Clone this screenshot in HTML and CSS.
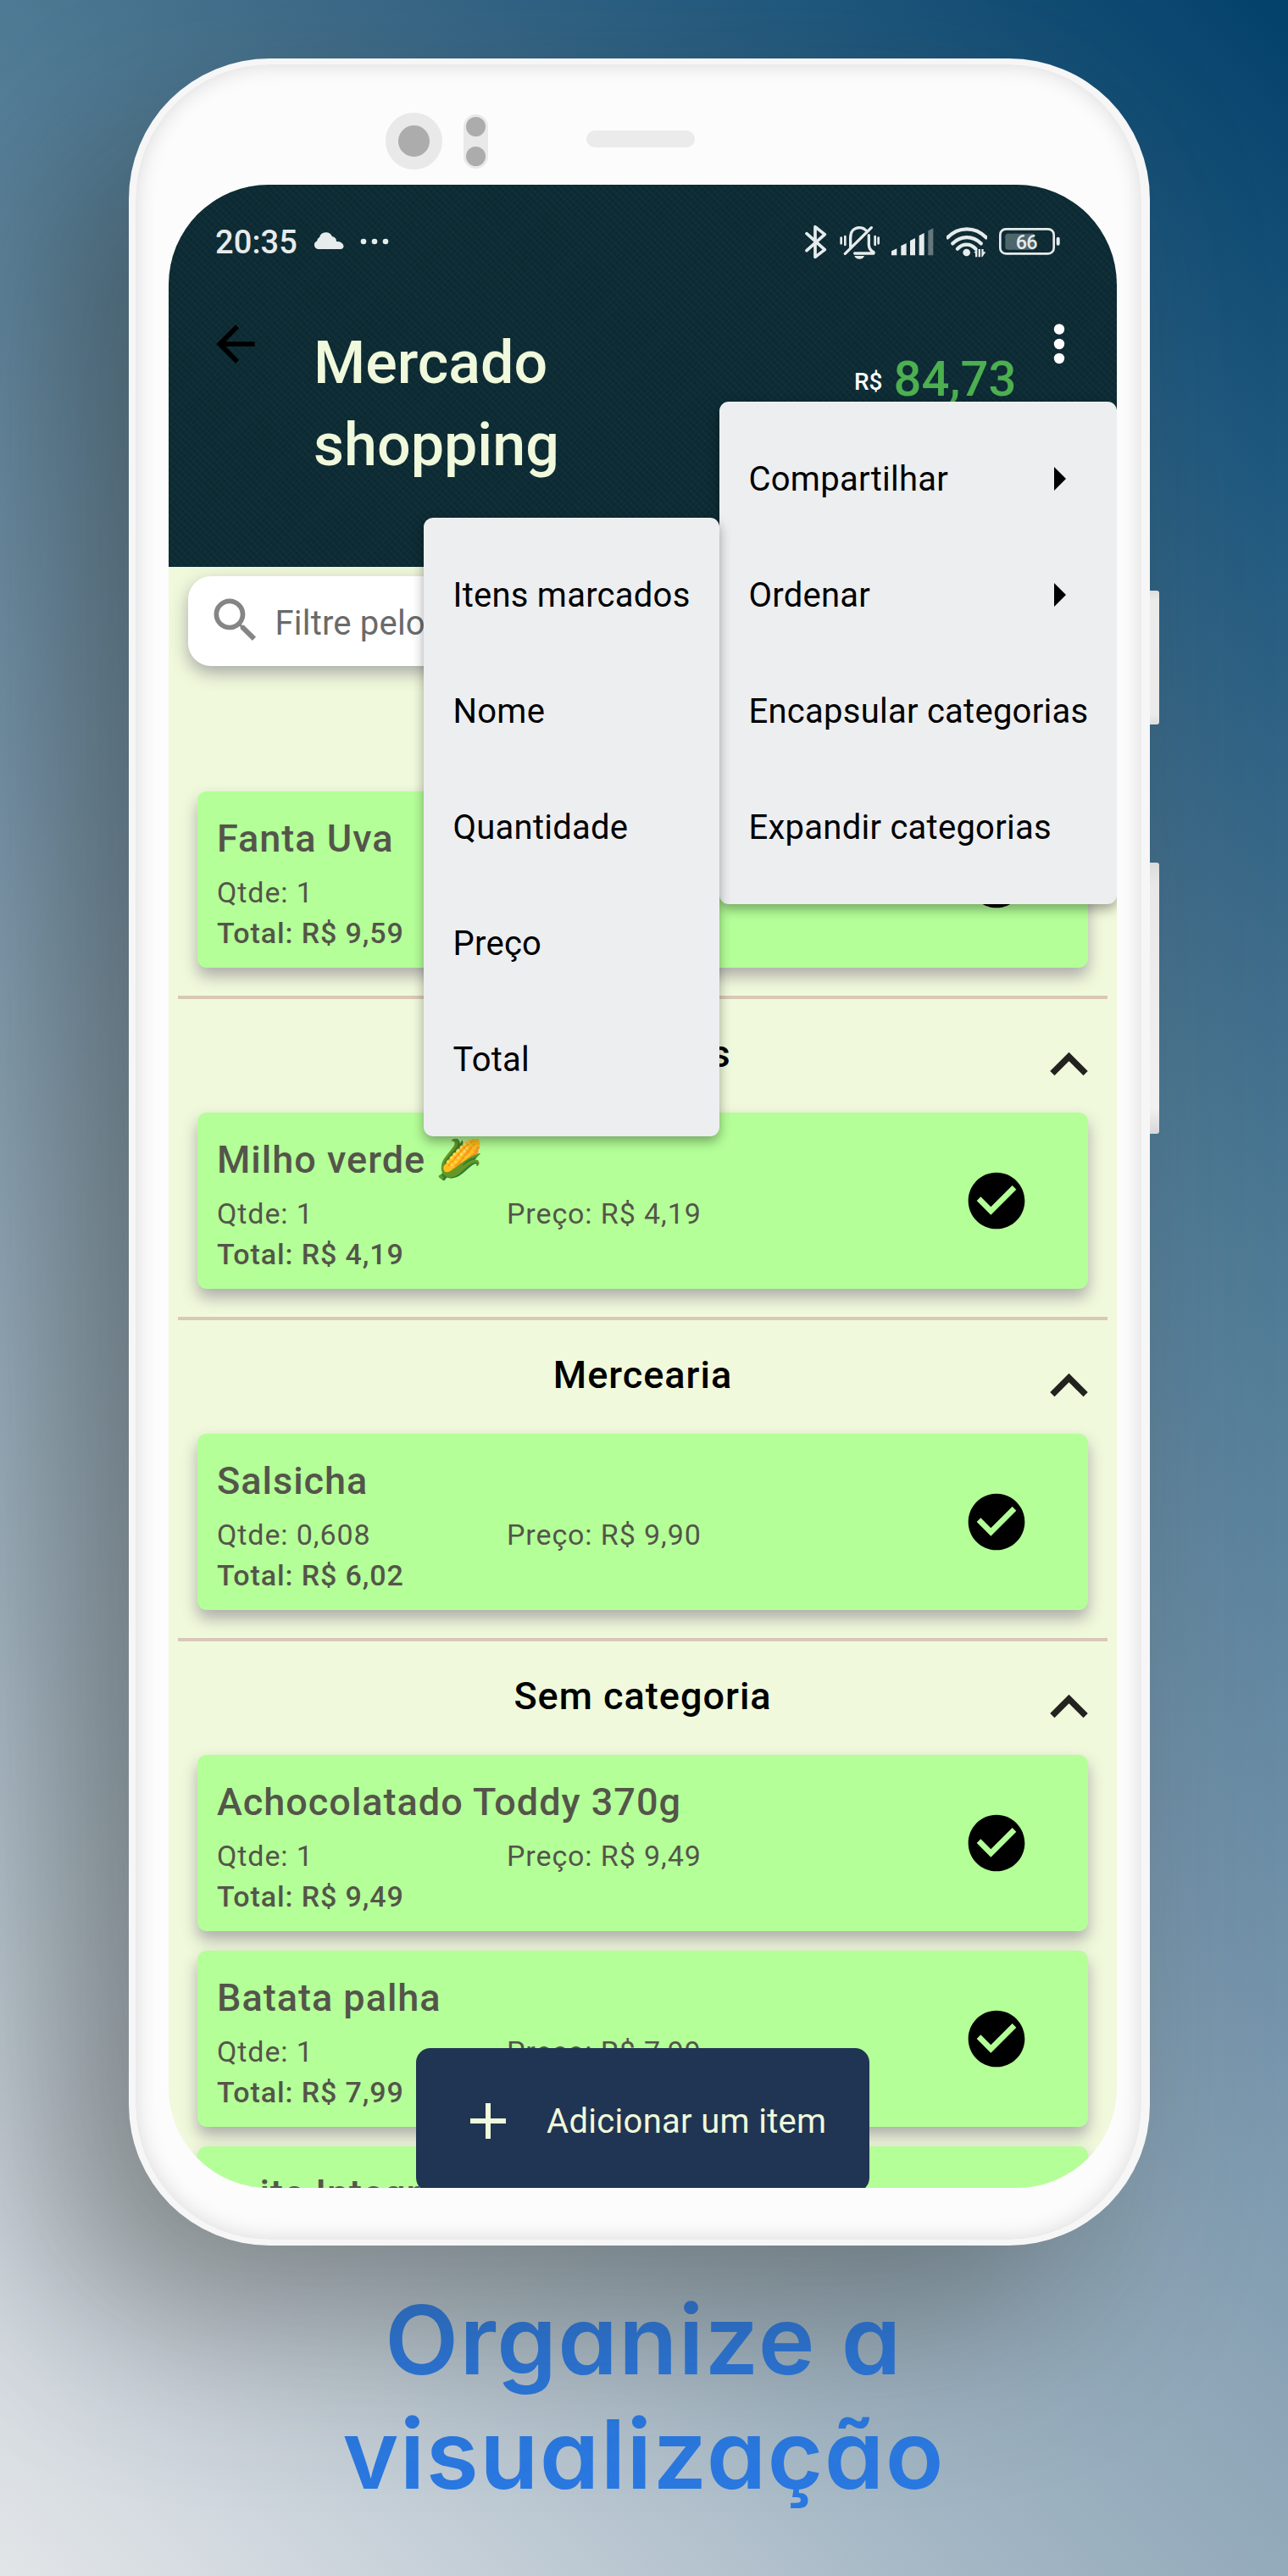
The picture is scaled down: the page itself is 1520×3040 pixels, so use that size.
FILE: index.html
```html
<!DOCTYPE html>
<html lang="pt-BR">
<head>
<meta charset="utf-8">
<title>Mercado shopping</title>
<link rel="stylesheet" href="styles.css">
</head>
<body>
<svg class="defs" width="0" height="0">
  <symbol id="check" viewBox="0 0 24 24"><path d="M12 2C6.48 2 2 6.48 2 12s4.48 10 10 10 10-4.48 10-10S17.520 2 12 2zm-2 15l-5-5 1.410-1.410L10 14.170l7.590-7.590L19 8l-9 9z"/></symbol>
  <symbol id="up" viewBox="0 0 24 24"><path d="M12 8l-6 6 1.410 1.410L12 10.830l4.590 4.580L18 14z"/></symbol>
</svg>
<main class="stage">
  <div class="phone">
    <span class="side-key key-power"></span>
    <span class="side-key key-volume"></span>
    <div class="bezel">
      <span class="camera"></span>
      <span class="sensors"><i></i><i></i></span>
      <span class="speaker"></span>
    </div>
    <div class="screen">
      <header class="app-header">
        <div class="status">
          <span class="clock">20:35</span>
          <svg class="cloud" width="36" height="20" viewBox="0 0 36 20"><path d="M5 20a5 5 0 0 1-1-9.500A6 6 0 0 1 7 6a8 8 0 0 1 15-1 6 6 0 0 1 5 6c5 0 8 2 8.500 5.500 0 2-1.500 3.500-3.500 3.500z"/></svg>
          <svg class="more" width="34" height="8" viewBox="0 0 34 8"><circle cx="4" cy="4" r="3.300"/><circle cx="17" cy="4" r="3.300"/><circle cx="30" cy="4" r="3.300"/></svg>
          <div class="indicators">
            <svg width="26" height="41" viewBox="30 28 78 123"><path class="ln" stroke-width="11" d="M36 60L100 117 66 143V36L100 63 36 120"/></svg>
            <svg width="47" height="41" viewBox="153 28 141 123"><path class="ln" stroke-width="10" d="M191 108V75c0-22 12-36 32-36 9 0 16 3 21 8M256 66v34c0 14 6 20 17 26v4H206M172 131L265 39"/><path class="ln" stroke-width="8" d="M158 75v20M172 70v30M278 70v30M290 75v20"/><path d="M205 139h35c-5 15-30 15-35 0z"/></svg>
            <svg width="50" height="33" viewBox="336 42 150 99"><path d="M336 139v-15l19-9v24zM370 139v-34l19-9v43zM402 139V87l18-9v61zM434 139V69l18-9v79z"/><path class="dim" d="M466 139V52l18-9v96z"/></svg>
            <svg width="48" height="37" viewBox="525 37 144 111"><path class="ln" stroke-width="13" stroke-linecap="butt" d="M529 77c38-40 98-40 136 0M547 98c28-29 72-29 100 0M564 117c18-20 46-20 64 0"/><circle cx="596" cy="130" r="13"/><path d="M622 130l12-12v28h-7v-14zM638 118h7v28h-7zM649 118h7v10h8l-12 18h-3z"/></svg>
            <svg class="battery" width="72" height="34" viewBox="714 40 216 102"><rect class="ln" x="718" y="47" width="190" height="87" rx="20" stroke-width="8"/><path class="charge" d="M736 72q0-9 9-9h93v57h-93q-9 0-9-9z"/><rect x="917" y="75" width="12" height="30" rx="6"/><text x="811" y="117" text-anchor="middle">66</text></svg>
          </div>
        </div>
        <div class="toolbar">
          <svg class="back" width="68" height="68" viewBox="0 0 24 24"><path d="M20 11H7.830l5.590-5.590L12 4l-8 8 8 8 1.410-1.410L7.830 13H20z"/></svg>
          <h1>Mercado<br>shopping</h1>
          <p class="sum"><small>R$</small><strong>84,73</strong></p>
          <svg class="kebab" width="14" height="50" viewBox="0 0 14 50"><circle cx="7" cy="7.500" r="6.200"/><circle cx="7" cy="25" r="6.200"/><circle cx="7" cy="42" r="6.200"/></svg>
        </div>
      </header>

      <div class="search">
        <svg width="68" height="68" viewBox="0 0 24 24"><path d="M15.500 14h-.790l-.280-.270A6.471 6.471 0 0 0 16 9.500 6.500 6.500 0 1 0 9.500 16c1.610 0 3.090-.590 4.230-1.570l.270.280v.790l5 4.990L20.490 19l-4.990-5zm-6 0C7.010 14 5 11.990 5 9.500S7.010 5 9.500 5 14 7.010 14 9.500 11.990 14 9.500 14z"/></svg>
        <span>Filtre pelo nome</span>
      </div>

      <section class="first">
        <article class="card"><div class="info"><h3>Fanta Uva</h3><p><span>Qtde: 1</span><span>Preço: R$ 9,59</span></p><b>Total: R$ 9,59</b></div><svg width="80" height="80"><use href="#check"/></svg></article>
      </section>
      <section>
        <header><h2>Enlatados</h2><svg width="89" height="89"><use href="#up"/></svg></header>
        <article class="card"><div class="info"><h3>Milho verde <span class="emoji">🌽</span></h3><p><span>Qtde: 1</span><span>Preço: R$ 4,19</span></p><b>Total: R$ 4,19</b></div><svg width="80" height="80"><use href="#check"/></svg></article>
      </section>
      <section>
        <header><h2>Mercearia</h2><svg width="89" height="89"><use href="#up"/></svg></header>
        <article class="card"><div class="info"><h3>Salsicha</h3><p><span>Qtde: 0,608</span><span>Preço: R$ 9,90</span></p><b>Total: R$ 6,02</b></div><svg width="80" height="80"><use href="#check"/></svg></article>
      </section>
      <section>
        <header><h2>Sem categoria</h2><svg width="89" height="89"><use href="#up"/></svg></header>
        <article class="card"><div class="info"><h3>Achocolatado Toddy 370g</h3><p><span>Qtde: 1</span><span>Preço: R$ 9,49</span></p><b>Total: R$ 9,49</b></div><svg width="80" height="80"><use href="#check"/></svg></article>
        <article class="card"><div class="info"><h3>Batata palha</h3><p><span>Qtde: 1</span><span>Preço: R$ 7,99</span></p><b>Total: R$ 7,99</b></div><svg width="80" height="80"><use href="#check"/></svg></article>
        <article class="card"><div class="info"><h3>Leite Integral</h3></div></article>
      </section>

      <nav class="menu main-menu">
        <a>Compartilhar<i></i></a>
        <a>Ordenar<i></i></a>
        <a>Encapsular categorias</a>
        <a>Expandir categorias</a>
      </nav>
      <nav class="menu sort-menu">
        <a>Itens marcados</a>
        <a>Nome</a>
        <a>Quantidade</a>
        <a>Preço</a>
        <a>Total</a>
      </nav>
      <div class="fab">
        <svg width="42" height="42" viewBox="0 0 42 42"><path d="M18 0h6v18h18v6H24v18h-6V24H0v-6h18z"/></svg>
        <span>Adicionar um item</span>
      </div>
    </div>
  </div>
  <p class="caption">Organize a<br>visualização</p>
</main>
</body>
</html>
```
FILE: styles.css
```css
* { box-sizing: border-box; margin: 0; padding: 0; }
body { width: 1520px; height: 3040px; overflow: hidden; font-family: Roboto, sans-serif; }
svg { display: block; flex: none; }
.defs { position: absolute; }

.stage {
  width: 1520px; height: 3040px; padding: 69px 0 0 152px; overflow: hidden;
  background: linear-gradient(225deg, #03406a 0%, #20597f 13%, #406d8b 26%, #4e7a95 33%, #7594ab 52.6%, #8aa3b5 61.6%, #a3b6c4 74.6%, #cdd5dc 91%, #e2e5e8 100%);
}

.phone {
  position: relative; z-index: 1; width: 1205px; height: 2581px;
  border: 7px solid #f6f6f6; border-width: 7px 10px 7px 8px; border-radius: 166px;
  background: #fcfcfc;
  box-shadow: inset 0 0 26px rgba(0,0,0,.14), -84px 84px 210px rgba(50,50,45,.45);
}
.side-key { position: absolute; left: 1197px; width: 11px; border-radius: 0 3px 3px 0; background: linear-gradient(#dcdddd, #ebebeb 12px, #ebebeb calc(100% - 12px), #dcdddd); }
.key-power { top: 621px; height: 158px; }
.key-volume { top: 942px; height: 320px; background: linear-gradient(#dadbdb, #e8e8e8 25px, #f1f1f1 calc(100% - 30px), #d8d8d8); }

.bezel { height: 142px; display: flex; align-items: flex-start; padding-left: 295px; }
.camera { width: 67px; height: 67px; margin-top: 57px; border-radius: 50%; background: #acacac; border: 15px solid #e9e9e9; }
.sensors { width: 29px; height: 64px; margin: 59px 0 0 25px; padding: 3px; border-radius: 15px; background: #e9e9e9; display: flex; flex-direction: column; justify-content: space-between; }
.sensors i { width: 23px; height: 23px; border-radius: 50%; background: #acacac; }
.speaker { width: 128px; height: 20px; margin: 78px 0 0 116px; border-radius: 10px; background: #ebebeb; }

.screen { position: relative; width: 1119px; height: 2364px; margin-left: 39px; border-radius: 118px; overflow: hidden; background: #f0f9db; }

.app-header {
  height: 451px; color: #f0f9db;
  background: repeating-linear-gradient(45deg, rgba(255,255,255,.018) 0 2px, transparent 2px 6px), repeating-linear-gradient(-45deg, rgba(0,0,0,.07) 0 2px, transparent 2px 5px), #0d2c35;
}
.status { height: 134px; padding: 0 67px 0 55px; display: flex; align-items: center; fill: #e6ebec; }
.clock { margin-top: 2px; font-size: 38px; font-weight: 500; letter-spacing: .1px; color: #e6ebec; }
.cloud { margin: -3px 0 0 19px; }
.more { margin-left: 19px; }
.indicators { margin-left: auto; display: flex; align-items: center; gap: 14.500px; }
.ln { fill: none; stroke: #e6ebec; stroke-linecap: round; stroke-linejoin: round; }
.dim { opacity: .4; }
.charge { opacity: .3; }
.battery text { font: 500 70px Roboto, sans-serif; letter-spacing: -2px; }

.toolbar { position: relative; display: flex; align-items: flex-start; padding-left: 45px; }
.back { margin-top: 20px; }
h1 { width: 559px; margin: 28px 0 0 58px; font-size: 70px; line-height: 97px; font-weight: 500; }
.sum { display: flex; align-items: flex-start; gap: 13px; margin: 55px 0 0 79px; line-height: 80px; }
.sum small { padding-top: 4px; font-size: 28px; font-weight: 500; color: #fff; }
.sum strong { font-size: 58px; font-weight: 500; color: #4caf50; }
.kebab { margin: 29px 0 0 44px; fill: #fff; }

.search { width: 1074px; height: 106px; margin: 11px 0 0 22.500px; padding-left: 22px; display: flex; align-items: center; gap: 13px; border-radius: 27px; background: #fff; box-shadow: 0 8px 20px rgba(80,70,100,.45); font-size: 40px; letter-spacing: .2px; color: #6a6a6a; }
.search svg { fill: #858585; margin-top: -2px; }
.search span { margin-top: 5px; }

section { border-top: 4px solid #d9c8b8; margin: 0 11px; padding: 0 23px 32.500px; }
section.first { border-top: 0; padding-top: 147.500px; }
section header { height: 134px; display: grid; grid-template-columns: 1fr auto 1fr; align-items: center; }
h2 { grid-column: 2; margin-top: -5px; font-size: 45px; font-weight: 500; letter-spacing: 1px; color: #000; }
section header svg { justify-self: end; margin: 21px -22px 0 0; fill: #22231f; }
.card { height: 208.500px; display: flex; align-items: center; padding-right: 68px; border-radius: 11px; background: #b4ff98; color: #54554a; fill: #000; box-shadow: 0 10px 18px rgba(80,70,100,.42); }
.card + .card { margin-top: 22.500px; }
.info { flex: 1; align-self: stretch; padding: 26px 0 0 23px; }
h3 { height: 60px; line-height: 60px; font-size: 45px; font-weight: 500; letter-spacing: 1px; }
.emoji { font-family: "Noto Color Emoji", sans-serif; letter-spacing: 0; font-weight: 400; }
.info p { display: grid; grid-template-columns: 342px 1fr; margin-top: 10.500px; }
.info p, .info b { font-size: 34px; line-height: 47.500px; letter-spacing: .9px; }
.info b { display: block; font-weight: 500; }

.menu { position: absolute; padding: 22.500px 0 20px; border-radius: 11px; background: #edeef0; box-shadow: 0 6px 14px rgba(0,0,0,.35); font-size: 40px; letter-spacing: .25px; color: #000; }
.menu a { display: flex; align-items: center; justify-content: space-between; height: 137px; padding: 0 60px 0 34.500px; white-space: nowrap; }
.menu i { border-left: 14px solid #000; border-top: 14px solid transparent; border-bottom: 14px solid transparent; }
.main-menu { left: 650px; top: 256px; width: 469px; height: 593px; }
.sort-menu { left: 301px; top: 393px; width: 349px; height: 730px; }

.fab { position: absolute; left: 292px; top: 2199px; width: 535px; height: 170px; padding: 2px 0 0 64px; display: flex; align-items: center; gap: 48px; border-radius: 17px; background: #203553; color: #f0f9db; fill: #f0f9db; font-size: 40px; letter-spacing: .3px; }

.caption { width: 1215px; margin-top: 44px; text-align: center; font: 600 113px/135px Inter, sans-serif; letter-spacing: 1.350px; font-feature-settings: "cv11" 1; color: #2a79e2; }
```
